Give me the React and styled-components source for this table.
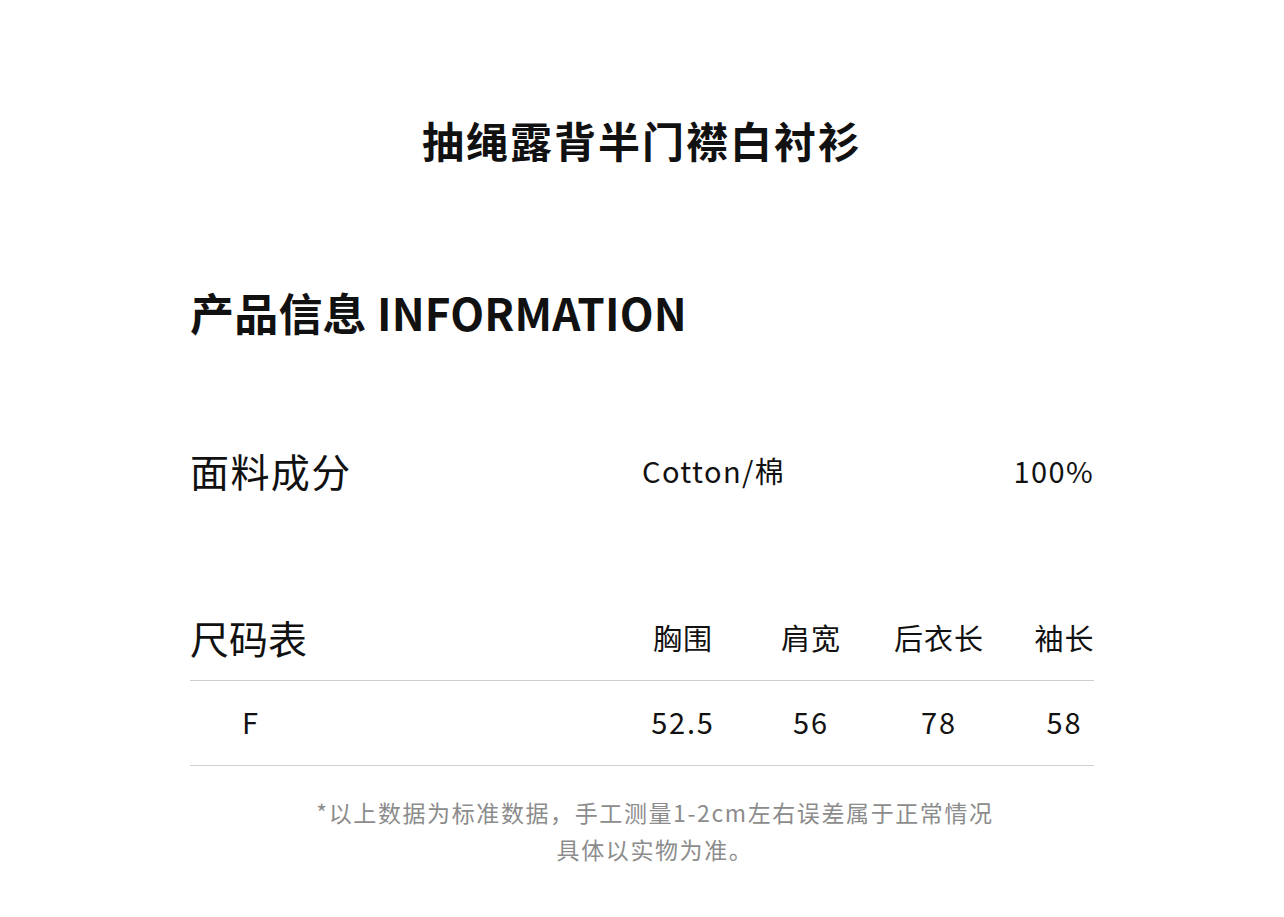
import styled, { createGlobalStyle } from 'styled-components';

const GlobalStyle = createGlobalStyle`
  html, body {
    margin: 0;
    padding: 0;
    background: #ffffff;
  }
  body {
    font-family: "Noto Sans CJK SC", "Noto Sans", sans-serif;
    color: #111111;
  }
`;

const Page = styled.div`
  width: 1284px;
  min-height: 917px;
  padding-top: 115px;
  box-sizing: border-box;
`;

const Title = styled.h1`
  margin: 0;
  text-align: center;
  font-size: 42px;
  line-height: 50px;
  font-weight: 700;
  letter-spacing: 2px;
`;

const Content = styled.div`
  width: 904px;
  margin: 0 0 0 190px;
`;

const SectionHeading = styled.h2`
  margin: 121px 0 0;
  font-size: 44px;
  line-height: 52px;
  font-weight: 700;
  letter-spacing: 0.2px;
`;

const Label = styled.div`
  font-size: 39px;
  line-height: 48px;
  font-weight: 400;
`;

const MaterialRow = styled.div`
  margin-top: 108px;
  display: grid;
  grid-template-columns: 452px 1fr auto;
  align-items: center;
  font-size: 29px;
  letter-spacing: 1.4px;
`;

const SizeTable = styled.div`
  margin-top: 119px;
`;

const SizeRow = styled.div`
  display: grid;
  grid-template-columns: 1fr 64px 64px 64px 59px;
  column-gap: 64px;
  align-items: center;
  padding: ${p => (p.$head ? '0 0 19px' : '20px 0 24px')};
  border-bottom: 1px solid #cfcfcf;
`;

const Cell = styled.div`
  font-size: 29px;
  line-height: 40px;
  letter-spacing: ${p => (p.$num ? '1.8px' : '1px')};
  text-align: center;
  white-space: nowrap;
  justify-self: center;
`;

const SizeName = styled.div`
  font-size: 29px;
  line-height: 40px;
  padding-left: 52px;
`;

const Note = styled.p`
  margin: 28px 0 0;
  padding-left: 26px;
  text-align: center;
  font-size: 23px;
  line-height: 37px;
  letter-spacing: 1.6px;
  color: #8c8c8c;
`;

const headers = ['胸围', '肩宽', '后衣长', '袖长'];
const sizes = [{ name: 'F', values: ['52.5', '56', '78', '58'] }];

export default function App() {
  return (
    <Page>
      <GlobalStyle />
      <Title>抽绳露背半门襟白衬衫</Title>
      <Content>
        <SectionHeading>产品信息 INFORMATION</SectionHeading>
        <MaterialRow>
          <Label>面料成分</Label>
          <div>Cotton/棉</div>
          <div>100%</div>
        </MaterialRow>
        <SizeTable>
          <SizeRow $head>
            <Label>尺码表</Label>
            {headers.map(h => (
              <Cell key={h}>{h}</Cell>
            ))}
          </SizeRow>
          {sizes.map(s => (
            <SizeRow key={s.name}>
              <SizeName>{s.name}</SizeName>
              {s.values.map((v, i) => (
                <Cell key={i} $num>
                  {v}
                </Cell>
              ))}
            </SizeRow>
          ))}
        </SizeTable>
      </Content>
      <Note>
        *以上数据为标准数据，手工测量1-2cm左右误差属于正常情况
        <br />
        具体以实物为准。
      </Note>
    </Page>
  );
}
